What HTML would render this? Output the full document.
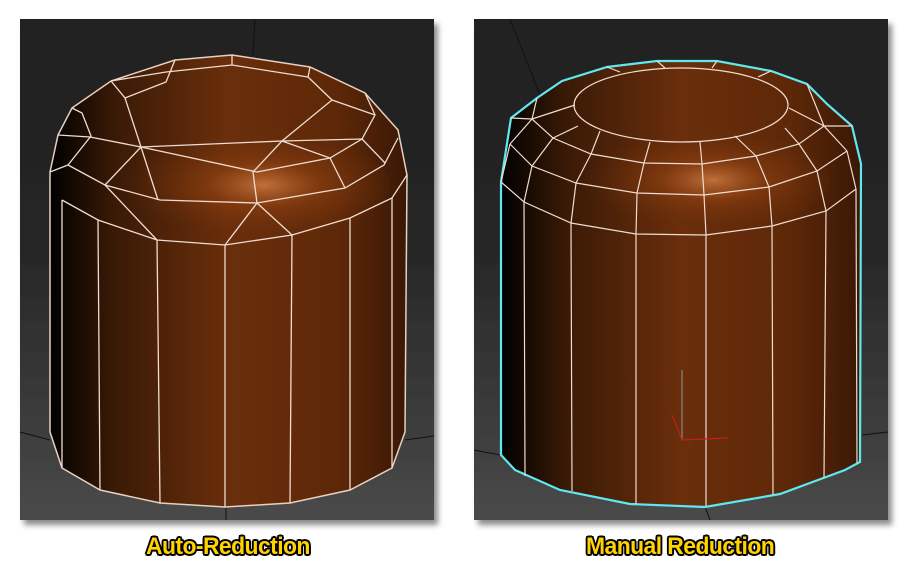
<!DOCTYPE html>
<html><head><style>
html,body{margin:0;padding:0;background:#fff;width:908px;height:571px;overflow:hidden}
.lbl{position:absolute;top:533px;font-family:"Liberation Sans",sans-serif;font-weight:bold;font-size:24px;color:#ffd200;letter-spacing:-0.6px;transform:scaleX(0.955);transform-origin:left;
text-shadow:-1.5px -1.5px 0 #000,1.5px -1.5px 0 #000,-1.5px 1.5px 0 #000,1.5px 1.5px 0 #000,0 2px 0 #000,0 -2px 0 #000,2px 0 0 #000,-2px 0 0 #000}
</style></head><body>
<svg width="908" height="571" style="position:absolute;left:0;top:0">
<defs>
<linearGradient id="bg" x1="0" y1="0" x2="0" y2="1"><stop offset="0" stop-color="#202020"/><stop offset="0.45" stop-color="#262626"/><stop offset="0.8" stop-color="#3c3c3c"/><stop offset="1" stop-color="#4a4a4a"/></linearGradient>
<linearGradient id="cyl" x1="0" y1="0" x2="1" y2="0"><stop offset="0" stop-color="#000"/><stop offset="0.18" stop-color="#3a1a06"/><stop offset="0.5" stop-color="#6a2e0b"/><stop offset="0.8" stop-color="#5e2808"/><stop offset="1" stop-color="#3a1805"/></linearGradient>
<radialGradient id="hl" cx="0.55" cy="0.5" r="0.5"><stop offset="0" stop-color="#c0703a"/><stop offset="0.4" stop-color="#8a3e10" stop-opacity="0.7"/><stop offset="1" stop-color="#6a2e0b" stop-opacity="0"/></radialGradient>
<filter id="sh" x="-5%" y="-5%" width="115%" height="115%"><feDropShadow dx="4" dy="5" stdDeviation="3" flood-color="#000" flood-opacity="0.45"/></filter>
</defs>
<rect x="20" y="19" width="414" height="501" fill="url(#bg)" filter="url(#sh)"/>
<rect x="474" y="19" width="414" height="501" fill="url(#bg)" filter="url(#sh)"/>
<g stroke="#111" stroke-width="1" fill="none">
<line x1="255" y1="19" x2="253" y2="56"/><line x1="20" y1="432" x2="50" y2="440"/><line x1="434" y1="436" x2="405" y2="440"/><line x1="226" y1="506" x2="226" y2="520"/>
<line x1="510" y1="19" x2="540" y2="95"/><line x1="474" y1="450" x2="500" y2="455"/><line x1="888" y1="432" x2="862" y2="435"/><line x1="705" y1="507" x2="710" y2="520"/>
</g>
<path d="M50,172 L58,135 L72,108 L111,81 L175,60 L232,55 L310,67 L365,93 L398,130 L407,175 L405,432 L392,468 L350,490 L290,503 L225,507 L160,503 L100,490 L62,468 L50,432 Z" fill="url(#cyl)" stroke="#e8d0c0" stroke-width="1.5"/>
<ellipse cx="250" cy="185" rx="140" ry="55" fill="url(#hl)"/>
<g stroke="#f0dcd0" stroke-width="1.3" fill="none">
<path d="M62,200 L98,220 L157,240 L225,245 L292,235 L350,218 L392,198 L407,175"/>
<path d="M50,172 L68,165 L105,185 L160,200 L257,203 L345,188 L384,165 L398,138"/>
<path d="M58,135 L90,137 L141,147 L282,141 L362,139"/>
<path d="M72,108 L82,113 L91,136 L68,165"/>
<path d="M111,81 L125,98 L141,147 L158,200"/>
<path d="M125,98 L166,82 L175,60"/><path d="M111,81 L166,72 L232,65 L308,77"/><path d="M232,55 L232,65"/>
<path d="M308,77 L310,67"/><path d="M308,77 L332,100 L282,141 L253,172 L257,203"/>
<path d="M332,100 L375,115 L362,139 L330,158 L257,172 L141,147"/>
<path d="M362,139 L385,163"/><path d="M375,115 L365,93"/><path d="M282,141 L330,158 L345,188"/>
<path d="M105,185 L157,240 M141,147 L105,185"/>
<path d="M257,203 L225,245 M257,203 L292,235"/>
<path d="M62,200 L62,468 M98,220 L100,490 M157,240 L160,503 M225,245 L225,507 M292,235 L290,503 M350,218 L350,490 M392,198 L392,468"/>
</g>
<path d="M501,182 L511,118 L537,98 L562,81 L607,67 L657,61 L717,61 L771,71 L807,84 L827,104 L852,126 L861,164 L860,462 L845,470 L780,494 L705,507 L630,504 L560,490 L515,470 L501,455 Z" fill="url(#cyl)" stroke="#5fe8f0" stroke-width="2.2"/>
<ellipse cx="700" cy="180" rx="130" ry="50" fill="url(#hl)"/>
<g stroke="#f0dcd0" stroke-width="1.2" fill="none">
<ellipse cx="681" cy="105" rx="107" ry="37"/>
<path d="M532,119 L553,138 L591,154 L644,163 L702,164 L756,156 L799,144 L824,126"/>
<path d="M510,144 L532,166 L576,183 L637,193 L704,195 L769,187 L817,171 L847,151"/>
<path d="M501,182 L524,202 L571,223 L636,234 L706,235 L772,226 L826,211 L856,189"/>
<path d="M532,119 L537,98 M532,119 L511,118 M553,138 L578,126 M591,154 L600,131 M644,163 L650,142 M702,164 L700,142 M756,156 L735,136 M799,144 L785,128 M824,126 L807,84 M824,126 L852,126 M532,119 L575,105 M824,126 L789,108"/>
<path d="M510,144 L532,119 M532,166 L553,138 M576,183 L591,154 M637,193 L644,163 M704,195 L702,164 M769,187 L756,156 M817,171 L799,144 M847,151 L824,126"/>
<path d="M501,182 L510,144 M524,202 L532,166 M571,223 L576,183 M636,234 L637,193 M706,235 L704,195 M772,226 L769,187 M826,211 L817,171 M856,189 L847,151"/>
<path d="M524,202 L525,476 M571,223 L572,491 M636,234 L636,504 M706,235 L706,506 M772,226 L773,495 M826,211 L824,478 M856,189 L857,463"/>
<path d="M607,67 L620,72 M657,61 L665,68 M717,61 L712,68 M771,71 L758,77"/>
</g>
<g stroke-width="1.2"><line x1="682" y1="370" x2="682" y2="440" stroke="#888"/><line x1="682" y1="440" x2="728" y2="438" stroke="#c02020"/><line x1="682" y1="440" x2="672" y2="415" stroke="#c02020"/></g>
</svg>
<div class="lbl" style="left:146px">Auto-Reduction</div>
<div class="lbl" style="left:586px">Manual Reduction</div>
</body></html>
